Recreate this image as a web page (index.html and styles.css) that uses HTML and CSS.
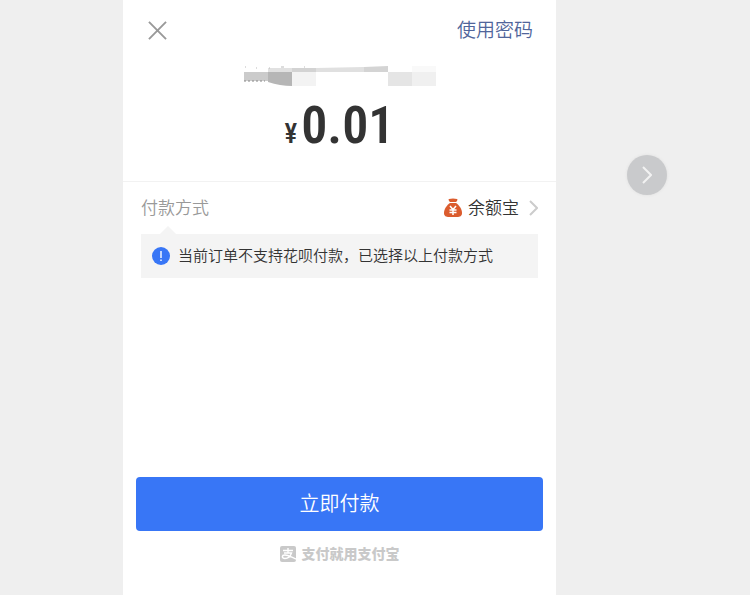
FILE: index.html
```html
<!DOCTYPE html>
<html lang="zh-CN">

<head>
  <meta charset="UTF-8">
  <meta name="viewport" content="width=device-width, initial-scale=1.0">
  <title>付款</title>
  <link rel="stylesheet" href="styles.css">
</head>

<body>
  <main class="panel">
    <header class="header">
      <button type="button" class="close" aria-label="关闭">
        <svg width="19" height="19" viewBox="0 0 20 20">
          <path d="M1 1L19 19M19 1L1 19" fill="none" stroke="#999" stroke-width="2" />
        </svg>
      </button>
      <a href="#" class="use-password">使用密码</a>
    </header>

    <!-- 打码的商户名 -->
    <svg class="merchant" width="192" height="20" viewBox="0 0 192 20" aria-hidden="true">
      <path d="M0 6H24V15H0Z" fill="#cbcbcb" />
      <path d="M24 6H48V20Q36 20 24 16Z" fill="#b6b6b6" />
      <path d="M24 2H48V6H24Z" fill="#e1e1e1" />
      <path d="M48 2H72V6H48Z" fill="#d3d3d3" />
      <path d="M48 6H72V20H48Z" fill="#f3f3f3" />
      <path d="M72 2L120 1V6H72Z" fill="#e0e0e0" />
      <path d="M120 1L144 0V6H120Z" fill="#d4d4d4" />
      <path d="M144 6H168V20H144Z" fill="#e5e5e5" />
      <path d="M168 0H192V6H168Z" fill="#f9f9f9" />
      <path d="M168 6H192V20H168Z" fill="#f0f0f0" />
      <path d="M1 1H2M12 2H13M25 2H26M37 1H40M60 1H61" stroke="#bbb" />
      <path d="M0 15H21" stroke="#888" stroke-dasharray="2 2" />
    </svg>

    <p class="amount"><span class="currency">¥</span>0.01</p>

    <section class="method">
      <div class="method-row">
        <span class="method-label">付款方式</span>
        <a href="#" class="method-value">
          <svg width="18" height="20" viewBox="0 0 18 20">
            <path d="M5 1Q9 0 13 1Q14 1 13 3L12 4H6L5 3Q4 1 5 1Z" fill="#db5c2e" />
            <path d="M6 5H12C15 7 18 11 18 15C18 18 16 19 13 19H5C2 19 0 18 0 15C0 11 3 7 6 5Z" fill="#db5c2e" />
            <path d="M6 8L9 11.5L12 8M9 11.5V17M5.5 12H12.5M5.5 14.5H12.5" fill="none" stroke="#fff" stroke-width="1.5" />
          </svg>
          <span class="text">余额宝</span>
          <svg class="arrow" width="9" height="16" viewBox="0 0 9 16">
            <path d="M1 1L8 8L1 15" fill="none" stroke="#ccc" stroke-width="2" />
          </svg>
        </a>
      </div>
      <div class="notice">
        <svg width="18" height="18" viewBox="0 0 18 18">
          <circle cx="9" cy="9" r="9" fill="#3876f6" />
          <path d="M9 4V11M9 12.5V14" stroke="#fff" stroke-width="1.4" />
        </svg>
        <span class="text">当前订单不支持花呗付款，已选择以上付款方式</span>
      </div>
    </section>

    <footer class="footer">
      <button type="button" class="pay">立即付款</button>
      <p class="slogan">
        <svg width="16" height="16" viewBox="0 0 16 16">
          <rect width="16" height="16" rx="2" fill="#c9c9c9" />
          <path d="M3 4.5H13M8 2V7M4 7H11.5C10.5 10 8 12.5 5 12.5C1.5 12.5 1.5 9 5 9C8 9 11 11 16 13" fill="none" stroke="#fff" stroke-width="1.4" />
        </svg>
        <span>支付就用支付宝</span>
      </p>
    </footer>
  </main>

  <aside class="side">
    <button type="button" class="next" aria-label="下一张">
      <svg width="10" height="18" viewBox="0 0 10 18">
        <path d="M1 1L9 9L1 17" fill="none" stroke="#f2f2f2" stroke-width="2" />
      </svg>
    </button>
  </aside>
</body>

</html>
```

FILE: styles.css
```css
* {
  box-sizing: border-box;
}

body {
  display: grid;
  grid-template-columns: 123fr 433fr 194fr;
  min-height: 100vh;
  margin: 0;
  background-color: #efefef;
  color: #333;
  font-family: "Liberation Sans", "Noto Sans CJK SC", sans-serif;
  font-weight: 350;
}

p {
  margin: 0;
}

a {
  color: inherit;
  text-decoration: none;
}

button {
  padding: 0;
  border: none;
  background: none;
  font: inherit;
  cursor: pointer;
}

svg {
  display: block;
  flex: none;
}

.panel {
  grid-column: 2;
  display: flex;
  flex-direction: column;
  background-color: #fff;
}

.header {
  display: flex;
  justify-content: space-between;
  align-items: center;
  height: 60px;
  padding: 0 23px 0 25px;
}

.use-password,
.method-label,
.text,
.pay {
  padding-bottom: 3px;
}

.use-password {
  color: #50659b;
  font-size: 19px;
}

.merchant {
  align-self: center;
  margin-top: 6px;
}

.amount {
  height: 95px;
  padding-top: 10px;
  font-family: "Roboto Condensed", Roboto, sans-serif;
  font-size: 52px;
  font-weight: 600;
  line-height: 60px;
  text-align: center;
}

.currency {
  margin-right: 4px;
  font-size: 27px;
  font-weight: 500;
}

.method {
  padding: 0 18px;
  border-top: 1px solid #f2f2f2;
}

.method-row {
  display: flex;
  justify-content: space-between;
  align-items: center;
  height: 52px;
  font-size: 17px;
}

.method-label {
  color: #999;
}

.method-value {
  display: flex;
  align-items: center;
  gap: 6px;
}

.arrow {
  margin-left: 4px;
}

.notice {
  position: relative;
  display: flex;
  align-items: center;
  gap: 8px;
  min-height: 44px;
  padding: 0 11px;
  background-color: #f4f4f4;
  font-size: 15px;
}

/* 提示框小三角 */
.notice::before {
  content: "";
  position: absolute;
  top: -8px;
  left: 19px;
  border: 8px solid transparent;
  border-top: none;
  border-bottom-color: #f4f4f4;
}

.footer {
  margin-top: auto;
  padding: 0 13px 31px;
}

.pay {
  width: 100%;
  height: 54px;
  border-radius: 4px;
  background-color: #3876f6;
  color: #fff;
  font-size: 20px;
}

.slogan {
  display: flex;
  justify-content: center;
  align-items: center;
  gap: 6px;
  margin-top: 13px;
  color: #c9c9c9;
  font-size: 14px;
  font-weight: 900;
  line-height: 20px;
}

.side {
  grid-column: 3;
  padding: 155px 0 0 71px;
}

.next {
  display: flex;
  justify-content: center;
  align-items: center;
  width: 40px;
  height: 40px;
  border-radius: 50%;
  background-color: #c9cacc;
  box-shadow: 0 0 3px #ddd;
}
```
